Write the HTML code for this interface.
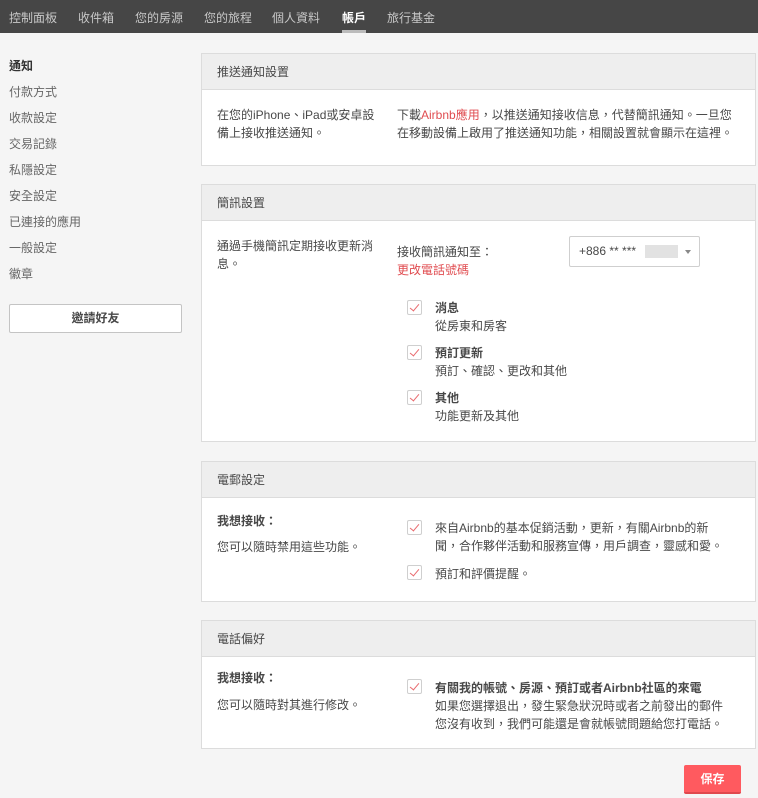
<!DOCTYPE html>
<html><head><meta charset="utf-8"><style>
*{margin:0;padding:0;box-sizing:border-box}
body{width:758px;height:798px;background:#f5f5f5;font-family:"Liberation Sans","Noto Sans CJK TC",sans-serif;font-size:12px;color:#484848;position:relative;overflow:hidden}
.nav{position:absolute;left:0;top:0;width:758px;height:33px;background:#464646}
.nav span{position:absolute;top:10px;font-size:12px;color:#c8c8c8;line-height:16px}
.nav .act{color:#fff;font-weight:bold}
.ul{position:absolute;left:342px;top:30px;width:24px;height:3px;background:#bbb}
.side{position:absolute;left:9px;font-size:12px;color:#666;line-height:16px}
.inv{position:absolute;left:9px;top:304px;width:173px;height:29px;background:#fff;border:1px solid #c4c4c4;border-radius:2px;text-align:center;line-height:27px;font-weight:bold;color:#484848}
.panel{position:absolute;left:201px;width:555px;background:#fff;border:1px solid #dcdcdc}
.hd{height:36px;background:#eeeeee;border-bottom:1px solid #dcdcdc;padding-left:15px;line-height:36px;font-size:12px;color:#484848}
.t{position:absolute;line-height:18px;font-size:12px}
.b{font-weight:bold}
.red{color:#e04c50}
.cb{position:absolute;width:15px;height:15px;border:1px solid #cfcfcf;border-radius:2px;background:#fff}
.cb:after{content:"";position:absolute;left:4px;top:1px;width:4px;height:8px;border-right:1px solid #e96a6e;border-bottom:1px solid #e96a6e;transform:rotate(40deg)}
.save{position:absolute;left:684px;top:765px;width:57px;height:29px;background:#ff5a5f;border-bottom:2px solid #e0484d;border-radius:2px;color:#fff;font-weight:bold;text-align:center;line-height:28px;font-size:12px}
</style></head><body>
<div class="nav">
<span style="left:9px">控制面板</span><span style="left:78px">收件箱</span><span style="left:135px">您的房源</span><span style="left:204px">您的旅程</span><span style="left:272px">個人資料</span><span class="act" style="left:342px">帳戶</span><span style="left:387px">旅行基金</span>
<div class="ul"></div></div>
<div class="side b" style="top:58px;color:#333">通知</div>
<div class="side" style="top:84px">付款方式</div>
<div class="side" style="top:110px">收款設定</div>
<div class="side" style="top:136px">交易記錄</div>
<div class="side" style="top:162px">私隱設定</div>
<div class="side" style="top:188px">安全設定</div>
<div class="side" style="top:214px">已連接的應用</div>
<div class="side" style="top:240px">一般設定</div>
<div class="side" style="top:266px">徽章</div>
<div class="inv">邀請好友</div>

<div class="panel" style="top:53px;height:113px"><div class="hd">推送通知設置</div>
<div class="t" style="left:15px;top:52px">在您的iPhone、iPad或安卓設<br>備上接收推送通知。</div>
<div class="t" style="left:195px;top:52px">下載<span class="red">Airbnb應用</span>，以推送通知接收信息，代替簡訊通知。一旦您<br>在移動設備上啟用了推送通知功能，相關設置就會顯示在這裡。</div>
</div>

<div class="panel" style="top:184px;height:258px"><div class="hd">簡訊設置</div>
<div class="t" style="left:15px;top:52px">通過手機簡訊定期接收更新消<br>息。</div>
<div class="t" style="left:195px;top:58px">接收簡訊通知至：<br><span class="red">更改電話號碼</span></div>
<div style="position:absolute;left:367px;top:51px;width:131px;height:31px;border:1px solid #cfcfcf;border-radius:2px;background:#fff">
<span style="position:absolute;left:9px;top:7px;font-size:12px">+886 ** ***</span>
<span style="position:absolute;left:75px;top:8px;width:33px;height:13px;background:#e2e2e2"></span>
<span style="position:absolute;left:115px;top:13px;border:3px solid transparent;border-top:4px solid #888"></span></div>
<div class="cb" style="left:205px;top:115px"></div><div class="t" style="left:233px;top:114px"><span class="b">消息</span><br>從房東和房客</div>
<div class="cb" style="left:205px;top:160px"></div><div class="t" style="left:233px;top:159px"><span class="b">預訂更新</span><br>預訂、確認、更改和其他</div>
<div class="cb" style="left:205px;top:205px"></div><div class="t" style="left:233px;top:204px"><span class="b">其他</span><br>功能更新及其他</div>
</div>

<div class="panel" style="top:461px;height:141px"><div class="hd">電郵設定</div>
<div class="t b" style="left:15px;top:50px">我想接收：</div>
<div class="t" style="left:15px;top:76px">您可以隨時禁用這些功能。</div>
<div class="cb" style="left:205px;top:58px"></div><div class="t" style="left:233px;top:57px">來自Airbnb的基本促銷活動，更新，有關Airbnb的新<br>聞，合作夥伴活動和服務宣傳，用戶調查，靈感和愛。</div>
<div class="cb" style="left:205px;top:103px"></div><div class="t" style="left:233px;top:103px">預訂和評價提醒。</div>
</div>

<div class="panel" style="top:620px;height:129px"><div class="hd">電話偏好</div>
<div class="t b" style="left:15px;top:48px">我想接收：</div>
<div class="t" style="left:15px;top:75px">您可以隨時對其進行修改。</div>
<div class="cb" style="left:205px;top:58px"></div><div class="t" style="left:233px;top:58px"><span class="b">有關我的帳號、房源、預訂或者Airbnb社區的來電</span><br>如果您選擇退出，發生緊急狀況時或者之前發出的郵件<br>您沒有收到，我們可能還是會就帳號問題給您打電話。</div>
</div>
<div class="save">保存</div>
</body></html>
